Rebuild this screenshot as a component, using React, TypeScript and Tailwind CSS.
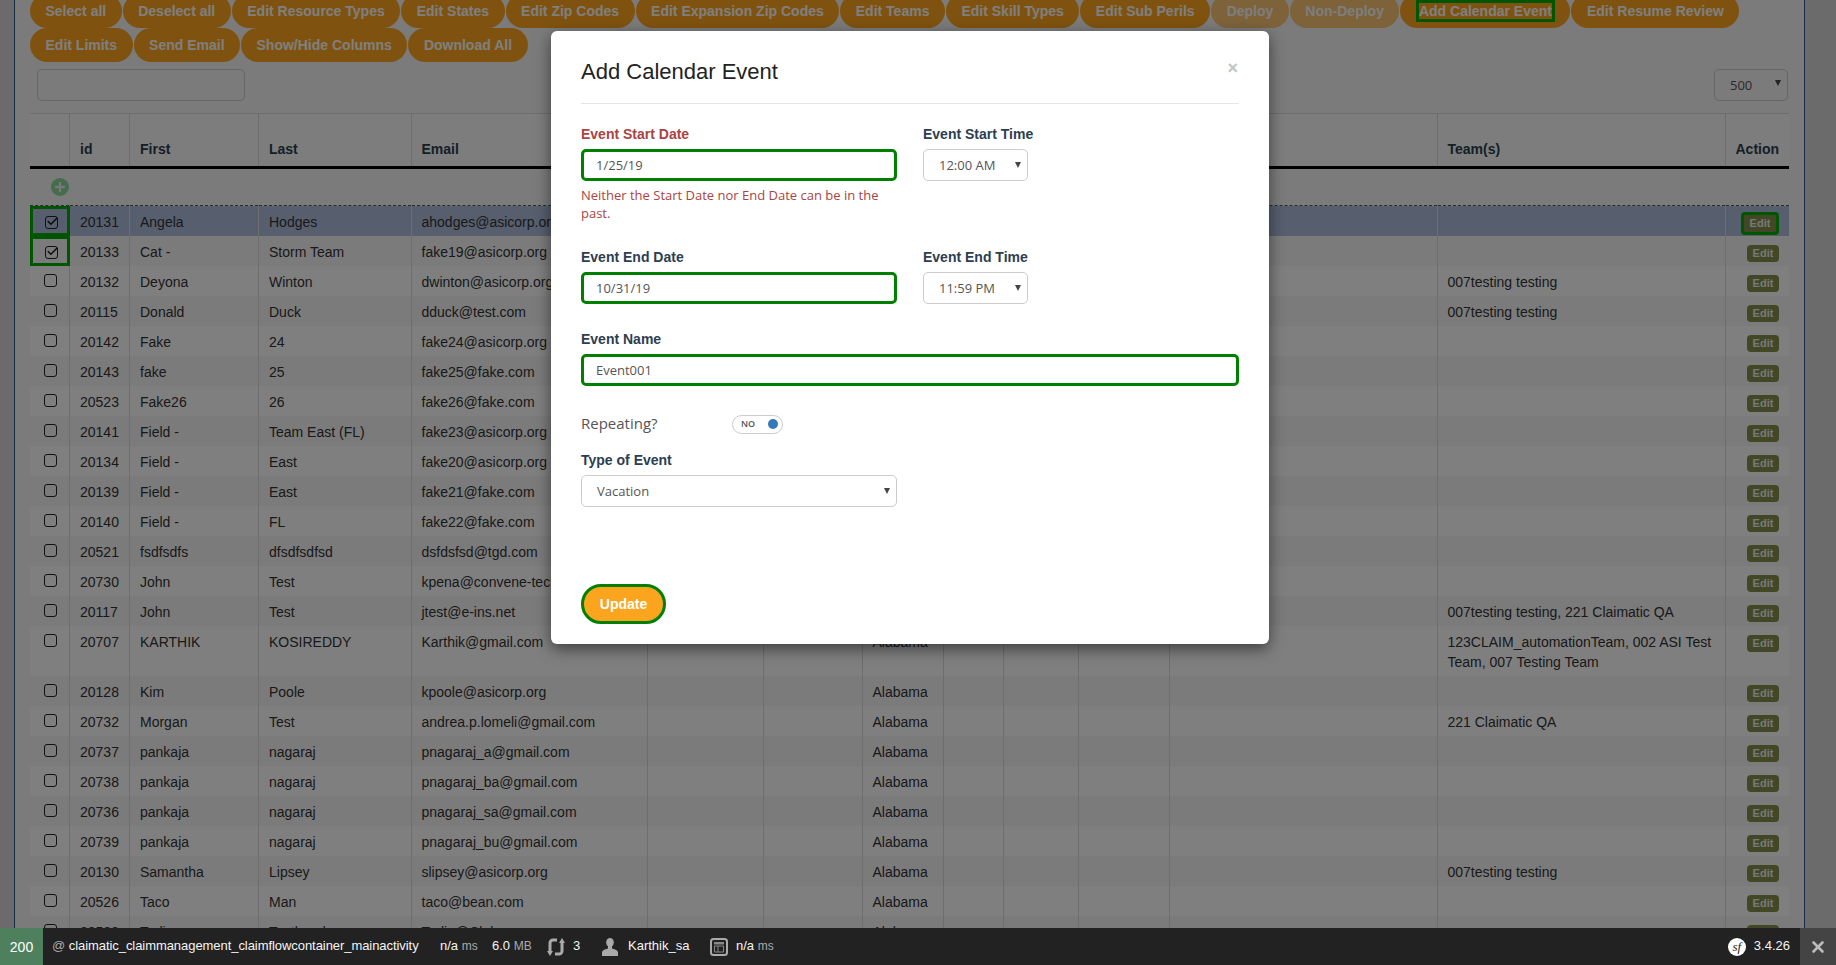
import { Check, Plus, X } from "lucide-react";

const toolbarButtons = [
  "Select all",
  "Deselect all",
  "Edit Resource Types",
  "Edit States",
  "Edit Zip Codes",
  "Edit Expansion Zip Codes",
  "Edit Teams",
  "Edit Skill Types",
  "Edit Sub Perils",
  "Deploy",
  "Non-Deploy",
  "Add Calendar Event",
  "Edit Resume Review",
  "Edit Limits",
  "Send Email",
  "Show/Hide Columns",
  "Download All",
];

interface Row {
  id: string;
  first: string;
  last: string;
  email: string;
  teams?: string;
}

const rows: Row[] = [
  { id: "20131", first: "Angela", last: "Hodges", email: "ahodges@asicorp.org" },
  { id: "20133", first: "Cat -", last: "Storm Team", email: "fake19@asicorp.org" },
  { id: "20132", first: "Deyona", last: "Winton", email: "dwinton@asicorp.org", teams: "007testing testing" },
  { id: "20115", first: "Donald", last: "Duck", email: "dduck@test.com", teams: "007testing testing" },
  { id: "20142", first: "Fake", last: "24", email: "fake24@asicorp.org" },
  { id: "20143", first: "fake", last: "25", email: "fake25@fake.com" },
  { id: "20523", first: "Fake26", last: "26", email: "fake26@fake.com" },
  { id: "20141", first: "Field -", last: "Team East (FL)", email: "fake23@asicorp.org" },
  { id: "20134", first: "Field -", last: "East", email: "fake20@asicorp.org" },
  { id: "20139", first: "Field -", last: "East", email: "fake21@fake.com" },
  { id: "20140", first: "Field -", last: "FL", email: "fake22@fake.com" },
  { id: "20521", first: "fsdfsdfs", last: "dfsdfsdfsd", email: "dsfdsfsd@tgd.com" },
  { id: "20730", first: "John", last: "Test", email: "kpena@convene-tech.com" },
  { id: "20117", first: "John", last: "Test", email: "jtest@e-ins.net", teams: "007testing testing, 221 Claimatic QA" },
  { id: "20707", first: "KARTHIK", last: "KOSIREDDY", email: "Karthik@gmail.com", teams: "123CLAIM_automationTeam, 002 ASI Test Team, 007 Testing Team" },
  { id: "20128", first: "Kim", last: "Poole", email: "kpoole@asicorp.org" },
  { id: "20732", first: "Morgan", last: "Test", email: "andrea.p.lomeli@gmail.com", teams: "221 Claimatic QA" },
  { id: "20737", first: "pankaja", last: "nagaraj", email: "pnagaraj_a@gmail.com" },
  { id: "20738", first: "pankaja", last: "nagaraj", email: "pnagaraj_ba@gmail.com" },
  { id: "20736", first: "pankaja", last: "nagaraj", email: "pnagaraj_sa@gmail.com" },
  { id: "20739", first: "pankaja", last: "nagaraj", email: "pnagaraj_bu@gmail.com" },
  { id: "20130", first: "Samantha", last: "Lipsey", email: "slipsey@asicorp.org", teams: "007testing testing" },
  { id: "20526", first: "Taco", last: "Man", email: "taco@bean.com" },
  { id: "20529", first: "Tarlin", last: "Testband", email: "Tarlin@Club.com" },
];

const cell = "border-r border-[#ddd] px-[10px] pt-[6px] pb-[4px] align-top leading-[20px]";

function ToolbarButton({ label }: { label: string }) {
  const disabled = label === "Deploy" || label === "Non-Deploy";
  const focused = label === "Add Calendar Event";
  return (
    <button
      className={
        "h-[34px] rounded-[17px] bg-[#ffa61e] px-[15.5px] text-sm font-bold text-white " +
        (disabled ? "opacity-60" : "")
      }
    >
      <span className={focused ? "mx-[3px] outline-[3px] outline-[#00aa00]" : ""}>{label}</span>
    </button>
  );
}

function RowCheckbox({ checked }: { checked: boolean }) {
  return (
    <span
      className={
        "relative block h-[13px] w-[13px] rounded-[3px] border-[1.5px] border-[#222] " +
        (checked ? "mt-[10px] ml-[15px]" : "mt-[8px] ml-[14px]")
      }
    >
      {checked && (
        <Check size={13} strokeWidth={2.5} className="absolute -top-[2px] -left-[0.5px] text-[#111]" />
      )}
    </span>
  );
}

function TableRow({ row, index }: { row: Row; index: number }) {
  const selected = index < 2;
  const active = index === 0;
  return (
    <tr
      className={
        (active ? "border-t border-dashed border-[#555] bg-[#aebcdc]" : index % 2 === 1 ? "bg-[#f6f6f6]" : "bg-white")
      }
    >
      <td
        className={
          "border-r border-[#ddd] align-top " +
          (selected ? "outline-[3px] -outline-offset-[3px] outline-[#00aa00]" : "")
        }
      >
        <RowCheckbox checked={selected} />
      </td>
      <td className={cell}>{row.id}</td>
      <td className={cell}>{row.first}</td>
      <td className={cell}>{row.last}</td>
      <td className={cell}>{row.email}</td>
      <td className={cell} />
      <td className={cell} />
      <td className={cell}>Alabama</td>
      <td className={cell} />
      <td className={cell} />
      <td className={cell} />
      <td className={cell} />
      <td className={cell}>{row.teams}</td>
      <td className="pt-[9px] pr-[10px] align-top">
        <div className="flex justify-end">
          <button
            className={
              "box-content h-[17px] w-[32px] rounded-[4px] bg-[#84904a] text-[11px] leading-[17px] font-bold text-[#f0f0f0] " +
              (active ? "-mt-[3px] border-[3px] border-[#00aa00]" : "")
            }
          >
            Edit
          </button>
        </div>
      </td>
    </tr>
  );
}

function Label({ text, error }: { text: string; error?: boolean }) {
  return (
    <label className={"mb-[5px] block text-sm leading-[20px] font-bold " + (error ? "text-[#a94442]" : "text-[#2c3e50]")}>
      {text}
    </label>
  );
}

function GreenInput({ value }: { value: string }) {
  return (
    <div className="flex h-[32px] w-full items-center rounded-[5px] border-[3px] border-[#008000] pl-[12px] font-['Open_Sans',sans-serif] text-[13px] text-[#555]">
      {value}
    </div>
  );
}

function SelectBox({ value, className }: { value: string; className: string }) {
  return (
    <div className={"relative flex h-[32px] items-center rounded-[5px] border border-[#ccc] pl-[15px] font-['Open_Sans',sans-serif] text-[13px] text-[#555] " + className}>
      {value}
      <span className="absolute top-[12px] right-[6px] h-0 w-0 border-x-[3px] border-t-[6px] border-x-transparent border-t-[#444]" />
    </div>
  );
}

function SyncIcon() {
  return (
    <svg viewBox="0 0 18 20" className="h-[20px] w-[18px]" fill="#aaa">
      <path d="M10 3H6a3 3 0 0 0-3 3v9" fill="none" stroke="#aaa" strokeWidth="3" />
      <path d="M8 17h4a3 3 0 0 0 3-3V5" fill="none" stroke="#aaa" strokeWidth="3" />
      <path d="M0 14h6l-3 5z" />
      <path d="M12 6h6l-3-5z" />
    </svg>
  );
}

function UserIcon() {
  return (
    <svg viewBox="0 0 16 18" className="h-[18px] w-[16px]" fill="#aaa">
      <ellipse cx="8" cy="4.500" rx="3.800" ry="4.500" />
      <path d="M6 8h4v2.500c3 .7 6 2 6 4V18H0v-3.500c0-2 3-3.300 6-4z" />
    </svg>
  );
}

function PageIcon() {
  return (
    <svg viewBox="0 0 18 18" className="h-[18px] w-[18px]" fill="none">
      <rect x="1" y="1" width="16" height="16" rx="2.500" stroke="#aaa" strokeWidth="2" />
      <rect x="4" y="4" width="10" height="2.500" fill="#888" />
      <path d="M4.500 8v6M8 8v6M4.500 8h9v6h-9" stroke="#888" />
    </svg>
  );
}

export default function App() {
  return (
    <div className="relative h-[965px] overflow-hidden bg-[#d6d6d6] font-['Liberation_Sans',Arial,sans-serif] text-sm text-[#333]">
      <div className="ml-[14px] h-full w-[1791px] border-x border-[#2d5a8e] bg-[#f6f6f6] px-[15px]">
        <div className="-mt-[6px] flex flex-wrap gap-x-[1px]">
          {toolbarButtons.map((label) => (
            <ToolbarButton key={label} label={label} />
          ))}
        </div>

        <div className="mt-[7px] flex justify-between pr-[1px]">
          <div className="ml-[7px] h-[32px] w-[208px] rounded-[5px] border border-[#ccc]" />
          <div className="flex h-[32px] w-[74px] items-center rounded-[5px] border border-[#ccc] pl-[15px] font-['Open_Sans',sans-serif] text-[13px] text-[#555]">
            500
            <span className="-mt-[5px] ml-[23px] h-0 w-0 border-x-[3px] border-t-[6px] border-x-transparent border-t-[#444]" />
          </div>
        </div>

        <table className="mt-[12px] w-[1759px] table-fixed border-collapse">
          <colgroup>
            <col className="w-[39.5px]" />
            <col className="w-[60px]" />
            <col className="w-[129px]" />
            <col className="w-[152.5px]" />
            <col className="w-[236px]" />
            <col className="w-[116px]" />
            <col className="w-[99px]" />
            <col className="w-[81px]" />
            <col className="w-[60px]" />
            <col className="w-[75px]" />
            <col className="w-[91px]" />
            <col className="w-[268px]" />
            <col className="w-[288px]" />
            <col className="w-[64px]" />
          </colgroup>
          <thead>
            <tr className="h-[52px] border-t border-[#ddd] bg-[#fafafa] text-left font-bold text-[#2c3e50]">
              {["", "id", "First", "Last", "Email", "", "", "", "", "", "", "", "Team(s)", "Action"].map((head, i) => (
                <th key={i} className="border-r border-[#ddd] px-[10px] pt-[18px] align-middle font-bold last:border-r-0">
                  {head}
                </th>
              ))}
            </tr>
            <tr className="h-[3px] bg-black">
              <th colSpan={14} className="h-[3px] p-0" />
            </tr>
          </thead>
          <tbody>
            <tr className="h-[37px] bg-[#f6f6f6]">
              <td colSpan={14} className="pl-[21px] align-middle">
                <span className="flex h-[18px] w-[18px] items-center justify-center rounded-full bg-[#8ad89a]">
                  <Plus size={14} strokeWidth={4} className="text-[#f0f0f0]" />
                </span>
              </td>
            </tr>
            {rows.map((row, i) => (
              <TableRow key={row.id} row={row} index={i} />
            ))}
          </tbody>
        </table>
      </div>

      {/* modal backdrop */}
      <div className="absolute inset-0 bg-black/50" />

      <div className="absolute top-[31px] left-[551px] h-[613px] w-[718px] rounded-[6px] bg-white pr-[30px] pl-[30px] shadow-[0_5px_15px_rgba(0,0,0,0.5)]">
        <div className="relative h-[73px] border-b border-[#e5e5e5] pt-[29px]">
          <h4 className="text-[22px] leading-[24px] text-[#222]">Add Calendar Event</h4>
          <span className="absolute top-[27px] right-[1px] text-[18px] leading-[20px] font-bold text-[#c4c4c4]">×</span>
        </div>

        <div className="mt-[20px] flex gap-[26px]">
          <div className="w-[316px]">
            <Label text="Event Start Date" error />
            <GreenInput value="1/25/19" />
            <p className="mt-[5px] font-['Open_Sans',sans-serif] text-[13px] leading-[18px] text-[#a94442]">
              Neither the Start Date nor End Date can be in the past.
            </p>
          </div>
          <div>
            <Label text="Event Start Time" />
            <SelectBox value="12:00 AM" className="w-[105px]" />
          </div>
        </div>

        <div className="mt-[25px] flex gap-[26px]">
          <div className="w-[316px]">
            <Label text="Event End Date" />
            <GreenInput value="10/31/19" />
          </div>
          <div>
            <Label text="Event End Time" />
            <SelectBox value="11:59 PM" className="w-[105px]" />
          </div>
        </div>

        <div className="mt-[25px]">
          <Label text="Event Name" />
          <GreenInput value="Event001" />
        </div>

        <div className="mt-[28px] flex h-[20px] items-center">
          <span className="w-[151px] font-['Open_Sans',sans-serif] text-[15px] text-[#555]">Repeating?</span>
          <span className="flex h-[19px] w-[51px] items-center justify-between rounded-full border border-[#ccc] pr-[4px] pl-[8px] font-['Open_Sans',sans-serif] text-[9px] font-semibold text-[#555]">
            NO
            <span className="h-[10px] w-[10px] rounded-full bg-[#337ab7]" />
          </span>
        </div>

        <div className="mt-[16px]">
          <Label text="Type of Event" />
          <SelectBox value="Vacation" className="w-[316px]" />
        </div>

        <button className="mt-[77px] h-[40px] w-[85px] rounded-[20px] border-[3px] border-[#008000] bg-[#fba41e] text-sm font-bold text-white">
          Update
        </button>
      </div>

      {/* debug toolbar */}
      <div className="absolute inset-x-0 bottom-0 flex h-[37px] items-center bg-[#222] text-[13px] text-[#f5f5f5]">
        <span className="flex h-full w-[43px] items-center justify-center bg-[#4f805d] text-[14px] text-white">200</span>
        <span className="ml-[9px] w-[388px] tracking-[-0.06px]"><span className="text-[#aaa]">@ </span>claimatic_claimmanagement_claimflowcontainer_mainactivity</span>
        <span className="w-[52px]">n/a <span className="text-[12px] text-[#aaa]">ms</span></span>
        <span className="w-[55px]">6.0 <span className="text-[12px] text-[#aaa]">MB</span></span>
        <span className="flex w-[55px] items-center gap-[8px]"><SyncIcon />3</span>
        <span className="flex w-[108px] items-center gap-[10px]"><UserIcon />Karthik_sa</span>
        <span className="flex items-center gap-[8px]"><PageIcon /><span>n/a <span className="text-[12px] text-[#aaa]">ms</span></span></span>
        <span className="ml-auto flex h-[18px] w-[18px] items-center justify-center rounded-full bg-white font-['Liberation_Serif',serif] text-[13px] leading-none text-[#222] italic">sf</span>
        <span className="mr-[10px] ml-[8px] text-[13px]">3.4.26</span>
        <span className="flex h-full w-[36px] items-center justify-center bg-[#444]">
          <X size={18} strokeWidth={3.5} className="text-[#bbb]" />
        </span>
      </div>
    </div>
  );
}
